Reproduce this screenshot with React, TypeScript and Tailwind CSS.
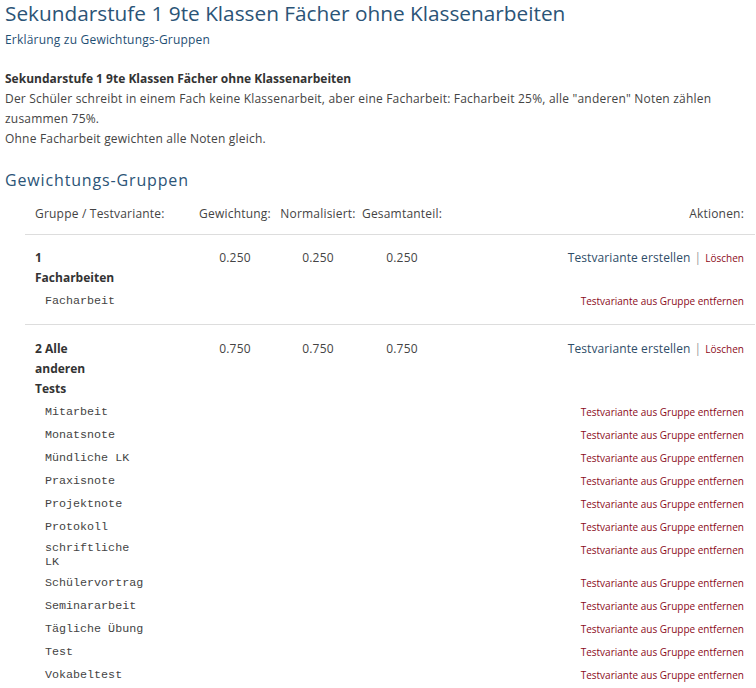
import React from "react";

const sans = { fontFamily: '"Open Sans", "DejaVu Sans", sans-serif' };

type Variant = string[];

const groups: { name: string[]; g: string; n: string; s: string; variants: Variant[] }[] = [
  {
    name: ["1", "Facharbeiten"],
    g: "0.250",
    n: "0.250",
    s: "0.250",
    variants: [["Facharbeit"]],
  },
  {
    name: ["2 Alle", "anderen", "Tests"],
    g: "0.750",
    n: "0.750",
    s: "0.750",
    variants: [
      ["Mitarbeit"],
      ["Monatsnote"],
      ["Mündliche LK"],
      ["Praxisnote"],
      ["Projektnote"],
      ["Protokoll"],
      ["schriftliche", "LK"],
      ["Schülervortrag"],
      ["Seminararbeit"],
      ["Tägliche Übung"],
      ["Test"],
      ["Vokabeltest"],
    ],
  },
];

export default function App() {
  return (
    <div className="bg-white min-h-[688px] text-[#444] tracking-[0.2px]" style={sans}>
      <div className="pl-[5px]">
        <h1 className="text-[20.8px] leading-[26px] tracking-normal text-[#2b5477] font-normal">
          Sekundarstufe 1 9te Klassen Fächer ohne Klassenarbeiten
        </h1>
        <div className="mt-[4px] text-[12px] leading-[20px] text-[#1f4f74]">
          Erklärung zu Gewichtungs-Gruppen
        </div>
        <div className="mt-[19px] text-[12px] leading-[20px]">
          <div className="font-bold text-[#333] tracking-normal">
            Sekundarstufe 1 9te Klassen Fächer ohne Klassenarbeiten
          </div>
          <div className="leading-[19.5px]">
            Der Schüler schreibt in einem Fach keine Klassenarbeit, aber eine Facharbeit: Facharbeit 25%, alle "anderen" Noten zählen
            <br />
            zusammen 75%.
          </div>
          <div className="leading-[21px]">Ohne Facharbeit gewichten alle Noten gleich.</div>
        </div>
        <h2 className="mt-[21px] text-[16px] leading-[20px] tracking-[0.85px] text-[#2b5477] font-normal">
          Gewichtungs-Gruppen
        </h2>
      </div>

      <div className="ml-[25px] w-[730px] mt-[14px] text-[12px]">
        <div className="grid grid-cols-[169px_82px_84px_84px_1fr] leading-[20px] pb-[10px] border-b border-[#dddddd]">
          <div className="pl-[10px]">Gruppe / Testvariante:</div>
          <div className="text-center">Gewichtung:</div>
          <div className="text-center">Normalisiert:</div>
          <div className="text-center">Gesamtanteil:</div>
          <div className="text-right pr-[11px]">Aktionen:</div>
        </div>

        {groups.map((grp, gi) => (
          <div
            key={gi}
            className={
              gi === 0
                ? "pt-[13px] pb-[12px] border-b border-[#dddddd]"
                : "pt-[14px] pb-[10px]"
            }
          >
            <div className="grid grid-cols-[169px_82px_84px_84px_1fr] leading-[20px]">
              <div className="pl-[10px] font-bold text-[#333] tracking-normal">
                {grp.name.map((l, i) => (
                  <div key={i}>{l}</div>
                ))}
              </div>
              <div className="text-center">{grp.g}</div>
              <div className="text-center">{grp.n}</div>
              <div className="text-center">{grp.s}</div>
              <div className="text-right pr-[11px] whitespace-nowrap">
                <span className="text-[#2f4d68] tracking-[0.1px] cursor-pointer">Testvariante erstellen</span>
                <span className="text-[#999] mx-[4px]">|</span>
                <span className="text-[10px] tracking-normal text-[#8b0a1a] cursor-pointer">Löschen</span>
              </div>
            </div>
            <div className="mt-[1px]">
              {grp.variants.map((v, vi) => (
                <div key={vi} className="flex items-center justify-between min-h-[23px]">
                  <div
                    className="pl-[20px] py-[2.5px] text-[11.7px] leading-[14px] tracking-normal text-[#444]"
                    style={{ fontFamily: '"Liberation Mono", "Courier New", monospace' }}
                  >
                    {v.map((l, i) => (
                      <div key={i}>{l}</div>
                    ))}
                  </div>
                  <div className="self-start pt-[4.5px] pr-[11px] text-[10px] leading-[14px] tracking-normal text-[#8b0a1a] cursor-pointer">
                    Testvariante aus Gruppe entfernen
                  </div>
                </div>
              ))}
            </div>
          </div>
        ))}
      </div>
    </div>
  );
}
